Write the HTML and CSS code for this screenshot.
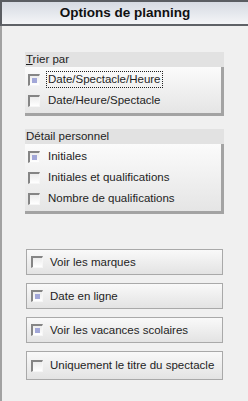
FILE: index.html
```html
<!DOCTYPE html>
<html lang="fr">
<head>
    <meta charset="UTF-8">
    <title>Options de planning</title>
    <link rel="stylesheet" href="styles.css">
</head>
<body>
    <div class="panel">
        <div class="title">Options de planning</div>

        <div class="content">

            <div class="group">
                <div class="group-head"><u>T</u>rier par</div>
                <div class="group-box">
                    <div class="row"><span class="check on"></span><span class="label focus">Date/Spectacle/Heure</span></div>
                    <div class="row"><span class="check"></span><span class="label">Date/Heure/Spectacle</span></div>
                </div>
            </div>

            <div class="group">
                <div class="group-head">Détail personnel</div>
                <div class="group-box">
                    <div class="row"><span class="check on"></span><span class="label">Initiales</span></div>
                    <div class="row"><span class="check"></span><span class="label">Initiales et qualifications</span></div>
                    <div class="row"><span class="check"></span><span class="label">Nombre de qualifications</span></div>
                </div>
            </div>

            <div class="options">
                <div class="opt"><span class="check"></span><span class="label">Voir les marques</span></div>
                <div class="opt"><span class="check on"></span><span class="label">Date en ligne</span></div>
                <div class="opt"><span class="check on"></span><span class="label">Voir les vacances scolaires</span></div>
                <div class="opt tall"><span class="check"></span><span class="label">Uniquement le titre du spectacle</span></div>
            </div>

        </div>
    </div>
</body>
</html>
```

FILE: styles.css
```css
body{
    margin: 0;
    font-family: "Liberation Sans", Arial, sans-serif;
    font-size: 11.5px;
    color: #1e1e1e;
}

.panel{
    width: 248px;
    height: 401px;
    background-color: #f0f0f0;
    overflow: hidden;
}

.title{
    height: 22px;
    line-height: 22px;
    border-top: 2px solid #5a5d62;
    border-bottom: 2px solid #5f6267;
    border-left: 2px solid #5a5d62;
    background: linear-gradient(#d6dae2, #e6e9ee 55%, #f4f5f7);
    text-align: center;
    font-size: 13.5px;
    font-weight: bold;
    color: #111;
}

.content{
    height: 375px;
    border-left: 2px solid #a2a2a2;
    padding: 26px 0 0 23px;
    box-sizing: border-box;
}

.group{
    width: 199px;
    margin-bottom: 13px;
}

.group-head{
    height: 15px;
    line-height: 15px;
    padding-left: 1px;
    background-color: #e2e2e2;
}

.group-box{
    padding: 2px 0 2px 3px;
    background: linear-gradient(#fbfbfb, #e5e5e5);
    border-right: 3px solid #a3a3a3;
    border-bottom: 3px solid #a3a3a3;
}

.row{
    height: 21px;
    display: flex;
    align-items: center;
}

.check{
    width: 9px;
    height: 9px;
    flex: none;
    display: inline-flex;
    align-items: center;
    justify-content: center;
    border-top: 2px solid #858585;
    border-left: 2px solid #858585;
    border-right: 1px solid #f6f6f6;
    border-bottom: 1px solid #f6f6f6;
    background: linear-gradient(#ececec, #ffffff);
}

.check.on::after{
    content: "";
    width: 5px;
    height: 5px;
    background-color: #a2a7d8;
}

.label{
    margin-left: 8px;
    padding: 1px 1px 2px 0;
    white-space: nowrap;
}

.label.focus{
    margin-left: 7px;
    padding-left: 1px;
    outline: 1px dotted #222;
}

.options{
    margin-top: 35px;
    margin-left: 1px;
    width: 197px;
    display: flex;
    flex-direction: column;
    gap: 8px;
}

.opt{
    height: 24px;
    display: flex;
    align-items: center;
    padding-left: 4px;
    border: 1px solid #a9a9a9;
    background: linear-gradient(#f9f9f9, #e3e3e3);
}

.opt .label{
    margin-left: 7px;
}

.opt.tall{
    height: 27px;
}
```
